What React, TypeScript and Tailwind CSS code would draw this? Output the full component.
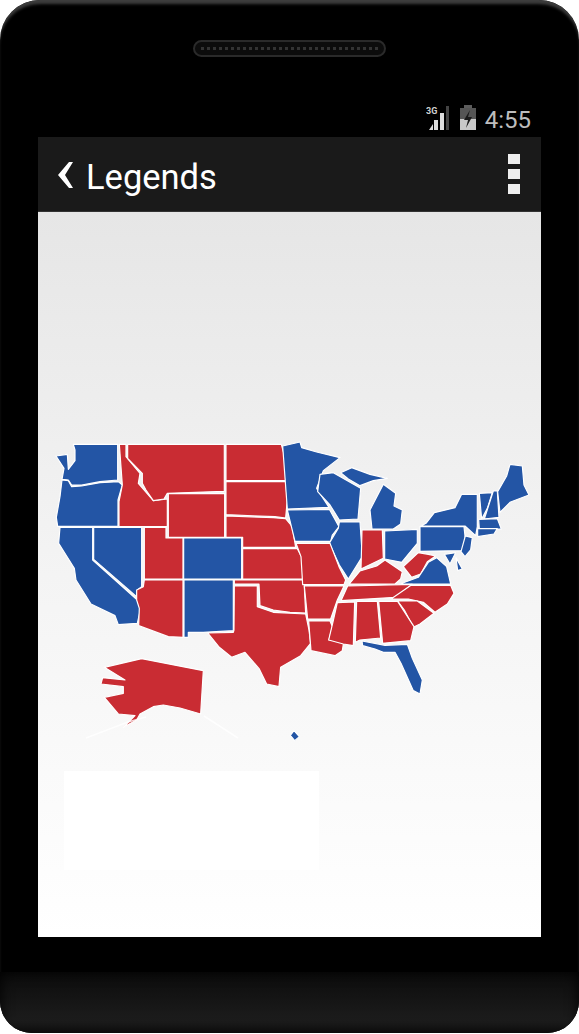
import React from 'react';

const RED = '#c92c33';
const BLUE = '#2355a5';

// west half, traced in a 3x grid starting at (40,430)
const westStates: { fill: string; pts: string }[] = [
  { fill: BLUE, pts: '100,43 233,43 233,150 180,155 125,165 95,165 85,150 66,148 72,115 48,78 82,73 85,118 105,92 105,60' },
  { fill: BLUE, pts: '66,150 85,152 95,170 125,168 180,158 235,155 247,165 234,210 234,289 53,289 49,262 60,200' },
  { fill: BLUE, pts: '60,292 158,292 158,390 292,510 302,535 292,580 235,584 225,557 153,522 108,450 103,415 78,375 56,340' },
  { fill: BLUE, pts: '161,292 305,292 305,470 292,480 290,500 161,388' },
  { fill: RED, pts: '238,43 258,43 258,80 300,130 295,160 340,212 382,207 382,290 237,290 237,215 247,165' },
  { fill: RED, pts: '263,43 553,43 553,184 382,190 372,207 340,212 318,180 307,160 307,130 263,85' },
  { fill: RED, pts: '385,191 554,191 554,322 385,322' },
  { fill: RED, pts: '313,292 378,292 378,324 429,324 429,447 313,447' },
  { fill: BLUE, pts: '431,324 605,324 605,447 431,447' },
  { fill: RED, pts: '313,450 429,450 429,622 385,620 296,587 298,535 290,510 290,480 310,470' },
  { fill: BLUE, pts: '432,450 580,450 580,602 490,607 445,607 445,622 432,622' },
  { fill: RED, pts: '558,43 724,43 737,90 737,152 558,152' },
  { fill: RED, pts: '558,155 737,155 742,210 737,264 705,260 558,254' },
  { fill: RED, pts: '558,258 700,263 737,266 757,290 767,352 608,352 608,322 558,322' },
  { fill: RED, pts: '608,356 772,356 787,385 789,447 608,447' },
  { fill: RED, pts: '583,450 792,450 797,549 750,547 700,540 660,527 657,462 583,462' },
  { fill: RED, pts: '583,468 652,468 652,530 700,547 797,552 807,600 812,640 782,677 722,712 717,770 680,762 658,717 615,667 575,682 538,652 503,609 580,607 582,600' },
  // alaska
  { fill: RED, pts: '193,712 305,686 490,722 482,852 420,834 370,825 340,830 300,852 290,870 250,892 285,857 235,852 193,802 250,790 250,770 183,762 188,743 255,750' },
];

// east half, traced in a 3x grid starting at (280,430)
const eastStates: { fill: string; pts: string }[] = [
  { fill: BLUE, pts: '8,48 60,36 65,53 110,66 180,83 130,122 110,175 147,232 22,237' },
  { fill: BLUE, pts: '22,240 148,238 177,290 157,315 152,334 45,334' },
  { fill: BLUE, pts: '120,133 160,128 242,175 234,267 178,270 150,225 113,185' },
  { fill: BLUE, pts: '182,128 215,113 270,133 322,145 280,152 240,167 205,147' },
  { fill: BLUE, pts: '310,163 347,190 342,228 367,240 362,282 340,297 276,297 270,240' },
  { fill: BLUE, pts: '178,276 240,276 247,380 205,447 178,405 148,340 175,295' },
  { fill: RED, pts: '246,300 307,300 310,385 243,417' },
  { fill: BLUE, pts: '314,303 412,298 412,340 365,397 314,387' },
  { fill: RED, pts: '208,462 240,423 290,408 315,390 367,425 362,447 345,462' },
  { fill: RED, pts: '370,410 415,368 445,373 467,378 442,395 422,432 395,442' },
  { fill: BLUE, pts: '360,462 415,442 445,397 470,383 500,410 512,462' },
  { fill: RED, pts: '48,340 150,340 177,410 197,450 192,464 68,464 63,380' },
  { fill: RED, pts: '73,468 192,468 172,510 152,567 83,567' },
  { fill: BLUE, pts: '246,633 300,643 315,646 382,643 397,685 427,750 420,792 400,782 363,700 345,667 310,667 285,657 248,647' },
  { fill: RED, pts: '86,573 150,573 157,590 147,630 192,630 187,662 165,677 93,662' },
  { fill: RED, pts: '172,518 224,516 220,647 190,642 146,630 158,580' },
  { fill: RED, pts: '230,514 292,514 302,624 240,630 226,637' },
  { fill: RED, pts: '203,468 397,463 347,502 183,512' },
  { fill: RED, pts: '393,466 512,466 522,490 502,522 465,547 430,517 385,507 333,507' },
  { fill: RED, pts: '353,513 412,513 462,550 420,582 400,592 373,540' },
  { fill: RED, pts: '296,514 353,514 402,590 392,632 308,640' },
  { fill: BLUE, pts: '420,290 552,290 557,335 547,362 420,364' },
  { fill: BLUE, pts: '438,280 463,248 525,233 545,193 592,193 592,290 587,317 555,288 423,288' },
  { fill: BLUE, pts: '556,318 577,323 572,360 555,380 543,365' },
  { fill: BLUE, pts: '493,373 527,368 510,402' },
  { fill: BLUE, pts: '528,383 547,417 533,422' },
  { fill: BLUE, pts: '598,190 637,188 622,235 605,267' },
  { fill: BLUE, pts: '640,183 652,183 657,262 613,267' },
  { fill: BLUE, pts: '690,103 727,108 732,165 747,195 690,217 660,247 653,185 680,138' },
  { fill: BLUE, pts: '596,268 652,266 664,297 598,297' },
  { fill: BLUE, pts: '593,296 652,296 642,312 593,320' },
  // hawaii
  { fill: BLUE, pts: '42,902 58,920 44,932 31,916' },
];

const UsMap = () => (
  <svg viewBox="38 430 503 320" className="block w-[503px] h-[320px] blur-[0.5px]">
    <g transform="translate(40 430) scale(0.3333)" stroke="#ffffff" strokeWidth="3.5" strokeLinejoin="round">
      {westStates.map((s, i) => (
        <polygon key={i} points={s.pts} fill={s.fill} />
      ))}
    </g>
    <g transform="translate(280 430) scale(0.3333)" stroke="#ffffff" strokeWidth="3.5" strokeLinejoin="round">
      {eastStates.map((s, i) => (
        <polygon key={i} points={s.pts} fill={s.fill} />
      ))}
    </g>
    {/* white slivers of the aleutians */}
    <path d="M86 738 L128 722 L146 717 M204 716 L238 738" stroke="#ffffff" strokeWidth="1.5" fill="none" opacity="0.8" />
  </svg>
);

const SignalIcon = () => (
  <svg width="25" height="26" viewBox="0 0 25 26">
    <text x="0" y="9" fontSize="9" fontWeight="700" fill="#d0d0d0" fontFamily="Roboto, sans-serif">3G</text>
    <path d="M3 25 L7 25 L7 19 Z" fill="#dddddd" />
    <rect x="8" y="15" width="4" height="10" fill="#dddddd" />
    <rect x="14" y="8" width="4" height="17" fill="#dddddd" />
    <rect x="20" y="1" width="3" height="24" fill="#444444" />
  </svg>
);

const BatteryIcon = () => (
  <svg width="18" height="26" viewBox="0 0 18 26">
    <rect x="5" y="0" width="8" height="3" fill="#5c5c5c" />
    <rect x="1" y="3" width="16" height="22" fill="#555555" />
    <rect x="1" y="14" width="16" height="11" fill="#c8c8c8" />
    <path d="M11 5 L5 15 L9 15 L7 23 L13 12 L9 12 Z" fill="#1a1a1a" />
  </svg>
);

export default function App() {
  return (
    <div className="w-[579px] h-[1034px] bg-white overflow-hidden font-['Roboto',sans-serif]">
      <div className="h-[1033px] flex flex-col bg-black rounded-t-[40px] rounded-b-[32px] overflow-hidden shadow-[inset_0_5px_3px_-1px_#3d3d3d]">
        {/* speaker + status bar */}
        <div className="h-[137px] shrink-0 flex flex-col items-center pt-[40px] px-[38px]">
          <div className="w-[193px] h-[17px] rounded-full border-2 border-[#2a2a2a] bg-[#0c0c0c] flex items-center px-[6px]">
            <div className="w-full h-0 border-t-[3px] border-dotted border-[#333333]" />
          </div>
          <div className="self-end mt-[48px] flex items-start gap-[8px] pr-[10px]">
            <SignalIcon />
            <BatteryIcon />
            <span className="text-[24px] leading-[26px] pt-[2px] text-[#bdbdbd]">4:55</span>
          </div>
        </div>

        {/* screen */}
        <div className="mx-[38px] w-[503px] h-[800px] shrink-0 flex flex-col">
          <div className="h-[75px] shrink-0 bg-[#1a1a1a] border-b border-[#333] flex items-center justify-between pl-[20px] pr-[21px]">
            <div className="flex items-center gap-[13px]">
              <svg width="15" height="26" viewBox="0 0 15 26" className="mt-[2px]">
                <path d="M11 0 L15 0 L7 13 L15 26 L11 26 L0 13 Z" fill="#ffffff" />
              </svg>
              <span className="text-[34.5px] leading-[40px] pt-[6px] text-white">Legends</span>
            </div>
            <div className="flex flex-col gap-[5px]">
              <div className="w-[12px] h-[10px] bg-[#eeeeee]" />
              <div className="w-[12px] h-[10px] bg-[#eeeeee]" />
              <div className="w-[12px] h-[10px] bg-[#eeeeee]" />
            </div>
          </div>
          <div className="flex-1 bg-gradient-to-b from-[#e6e6e6] via-[#f4f4f4] via-50% to-white pt-[218px]">
            <UsMap />
            <div className="mt-[21px] ml-[26px] w-[255px] h-[99px] bg-white" />
          </div>
        </div>

        {/* bottom chin */}
        <div className="mt-[35px] flex-1 bg-gradient-to-b from-[#0c0c0c] via-[#1c1c1c] via-80% to-[#161616] shadow-[inset_0_0_14px_#000]" />
      </div>
    </div>
  );
}
